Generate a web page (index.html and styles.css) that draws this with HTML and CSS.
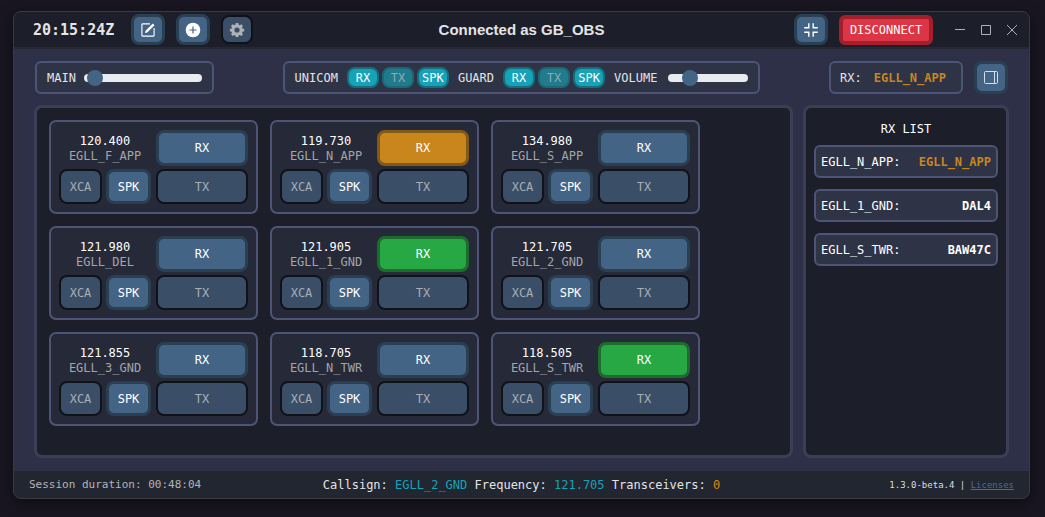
FILE: index.html
```html
<!DOCTYPE html>
<html lang="en">
<head>
<meta charset="utf-8">
<title>Radio client</title>
<link rel="stylesheet" href="styles.css">
</head>
<body>
<div class="window">
  <header class="titlebar">
    <div class="titlebar-left">
      <span class="clock">20:15:24Z</span>
      <button class="icon-btn" aria-label="Edit"><svg width="16" height="16" viewBox="0 0 16 16" fill="none" stroke="currentColor" stroke-width="1.1"><path d="M10 1.900H2.500a.6.6 0 0 0-.6.6v11a.6.6 0 0 0 .6.6h11a.6.6 0 0 0 .6-.6V6"/><path d="M4.900 11.100l.7-2.400L12.800 1.500l1.700 1.700-7.200 7.200z" fill="currentColor" stroke="none"/></svg></button>
      <button class="icon-btn" aria-label="Add"><svg width="16" height="16" viewBox="0 0 16 16"><circle cx="8" cy="8" r="7.300" fill="currentColor"/><path d="M8 4.500v7M4.500 8h7" stroke="#446485" stroke-width="1.200"/></svg></button>
      <button class="icon-btn dim" aria-label="Settings"><svg width="16" height="16" viewBox="0 0 16 16"><path d="M6.700 1h2.600l.4 1.800 1 .4 1.600-1 1.700 1.700-1 1.600.4 1 1.800.4v2.400l-1.800.4-.4 1 1 1.600-1.700 1.700-1.600-1-1 .4L9.300 15H6.700l-.4-1.600-1-.4-1.600 1L2 12.300l1-1.600-.4-1L.8 9.300V6.900l1.800-.4.4-1-1-1.600 1.700-1.700 1.600 1 1-.4z" fill="currentColor"/><circle cx="8" cy="8" r="2.600" fill="#3a4e68"/></svg></button>
    </div>
    <h1 class="title">Connected as GB_OBS</h1>
    <div class="titlebar-right">
      <button class="icon-btn" aria-label="Mini mode"><svg width="16" height="16" viewBox="0 0 16 16" fill="none" stroke="currentColor" stroke-width="1.400"><path d="M5.800 1.200v4.600H1.200M10.200 1.200v4.600h4.600M5.800 14.800v-4.600H1.200M10.200 14.800v-4.600h4.600"/></svg></button>
      <button class="disconnect">DISCONNECT</button>
      <div class="window-controls">
        <button aria-label="Minimize"><svg width="12" height="12" viewBox="0 0 12 12"><path d="M1 5.500h10"/></svg></button>
        <button aria-label="Maximize"><svg width="12" height="12" viewBox="0 0 12 12"><path d="M1.500 1.500h9v9h-9z"/></svg></button>
        <button aria-label="Close"><svg width="12" height="12" viewBox="0 0 12 12"><path d="M1 1l10 10M11 1L1 11"/></svg></button>
      </div>
    </div>
  </header>

  <main class="content">
    <div class="toolbar">
      <div class="box main-box">
        <label for="main-volume">MAIN</label>
        <input class="slider slider-main" id="main-volume" type="range" min="0" max="100" value="3">
      </div>
      <div class="box">
        <span>UNICOM</span>
        <div class="pills"><button class="pill">RX</button><button class="pill off">TX</button><button class="pill">SPK</button></div>
        <span>GUARD</span>
        <div class="pills"><button class="pill">RX</button><button class="pill off">TX</button><button class="pill">SPK</button></div>
        <label for="volume">VOLUME</label>
        <input class="slider slider-aux" id="volume" type="range" min="0" max="100" value="22">
      </div>
      <div class="toolbar-end">
        <div class="box last-rx"><span>RX:</span><strong class="amber">EGLL_N_APP</strong></div>
        <button class="icon-btn panel-btn" aria-label="Toggle RX list"><svg width="16" height="16" viewBox="0 0 16 16" fill="none" stroke="#d5dde5"><rect x="1.500" y="1.500" width="13" height="12" rx="1"/><path d="M11.500 1.500v12"/></svg></button>
      </div>
    </div>

    <div class="panels">
      <section class="panel stations" aria-label="Stations">
        <article class="station"><div class="station-id"><b>120.400</b><span>EGLL_F_APP</span></div><button class="key">RX</button><div class="pair"><button class="key off">XCA</button><button class="key">SPK</button></div><button class="key off">TX</button></article>
        <article class="station"><div class="station-id"><b>119.730</b><span>EGLL_N_APP</span></div><button class="key receiving">RX</button><div class="pair"><button class="key off">XCA</button><button class="key">SPK</button></div><button class="key off">TX</button></article>
        <article class="station"><div class="station-id"><b>134.980</b><span>EGLL_S_APP</span></div><button class="key">RX</button><div class="pair"><button class="key off">XCA</button><button class="key">SPK</button></div><button class="key off">TX</button></article>
        <article class="station"><div class="station-id"><b>121.980</b><span>EGLL_DEL</span></div><button class="key">RX</button><div class="pair"><button class="key off">XCA</button><button class="key">SPK</button></div><button class="key off">TX</button></article>
        <article class="station"><div class="station-id"><b>121.905</b><span>EGLL_1_GND</span></div><button class="key active">RX</button><div class="pair"><button class="key off">XCA</button><button class="key">SPK</button></div><button class="key off">TX</button></article>
        <article class="station"><div class="station-id"><b>121.705</b><span>EGLL_2_GND</span></div><button class="key">RX</button><div class="pair"><button class="key off">XCA</button><button class="key">SPK</button></div><button class="key off">TX</button></article>
        <article class="station"><div class="station-id"><b>121.855</b><span>EGLL_3_GND</span></div><button class="key">RX</button><div class="pair"><button class="key off">XCA</button><button class="key">SPK</button></div><button class="key off">TX</button></article>
        <article class="station"><div class="station-id"><b>118.705</b><span>EGLL_N_TWR</span></div><button class="key">RX</button><div class="pair"><button class="key off">XCA</button><button class="key">SPK</button></div><button class="key off">TX</button></article>
        <article class="station"><div class="station-id"><b>118.505</b><span>EGLL_S_TWR</span></div><button class="key active">RX</button><div class="pair"><button class="key off">XCA</button><button class="key">SPK</button></div><button class="key off">TX</button></article>
      </section>

      <aside class="panel rx-list">
        <h2>RX LIST</h2>
        <div class="rx-item"><span>EGLL_N_APP:</span><strong class="amber">EGLL_N_APP</strong></div>
        <div class="rx-item"><span>EGLL_1_GND:</span><strong>DAL4</strong></div>
        <div class="rx-item"><span>EGLL_S_TWR:</span><strong>BAW47C</strong></div>
      </aside>
    </div>
  </main>

  <footer class="statusbar">
    <span class="session">Session duration: 00:48:04</span>
    <span class="status">Callsign: <span class="teal">EGLL_2_GND</span> Frequency: <span class="teal">121.705</span> Transceivers: <span class="orange">0</span></span>
    <span class="version">1.3.0-beta.4 | <a href="#licenses">Licenses</a></span>
  </footer>
</div>
</body>
</html>
```

FILE: styles.css
```css
* { box-sizing: border-box; }

body {
  margin: 0;
  min-height: 100vh;
  display: flex;
  padding: 11px 15px 18px 13px;
  background: #191622;
  color: #e4e4e6;
  font: 12px/16px "DejaVu Sans Mono", "Liberation Mono", monospace;
}

button {
  font: inherit;
  color: #fff;
  padding: 0;
  display: flex;
  align-items: center;
  justify-content: center;
}

.window {
  flex: 1;
  display: flex;
  flex-direction: column;
  border: 1px solid #3b3a40;
  border-radius: 8px;
  overflow: hidden;
  background: #2e3047;
  box-shadow: 0 4px 14px rgba(0, 0, 0, 0.5);
}

/* Title bar */
.titlebar {
  display: grid;
  grid-template-columns: 1fr auto 1fr;
  align-items: center;
  height: 37px;
  padding: 0 11px 0 19px;
  background: #1c1e29;
  border-bottom: 2px solid #262836;
}

.titlebar-left, .titlebar-right { display: flex; align-items: center; gap: 11px; }
.titlebar-right { justify-content: flex-end; }
.clock { font-size: 15px; font-weight: 700; margin-right: 6px; }
.title { margin: 0 8px 0 0; font: 700 15px/18px "Liberation Sans", Arial, sans-serif; }

.icon-btn {
  width: 34px;
  height: 31px;
  border: 3px solid #2b3f53;
  border-radius: 8px;
  background: #446485;
}

.icon-btn.dim {
  width: 32px;
  height: 29px;
  border: 2px solid #10121a;
  background: #3a4e68;
  color: #b0b1b3;
}

.disconnect {
  width: 94px;
  height: 30px;
  border: 4px solid #a51e2b;
  border-radius: 6px;
  background: #dc3545;
}

.window-controls { display: flex; gap: 14px; margin-left: 10px; }
.window-controls button { width: 12px; height: 12px; border: 0; background: none; }
.window-controls path { fill: none; stroke: #b0b0b8; }

/* Toolbar */
.content {
  flex: 1;
  display: flex;
  flex-direction: column;
  gap: 11px;
  padding: 12px 20px 13px;
}

.toolbar { display: flex; justify-content: space-between; padding: 0 1px; }
.toolbar-end { display: flex; gap: 11px; }

.box {
  display: flex;
  align-items: center;
  gap: 9px;
  height: 33px;
  padding: 0 10px;
  border: 2px solid #4e5476;
  border-radius: 6px;
  background: #2f3346;
}

.main-box { gap: 8px; }
.last-rx { gap: 12px; padding: 0 15px 0 9px; }
.panel-btn { height: 33px; }
.pills { display: flex; gap: 3px; }

.pill {
  width: 32px;
  height: 21px;
  border: 2px solid #136f7f;
  border-radius: 8px;
  background: #17a2b8;
}

.pill.off { border-color: #1b6877; background: #207b8d; color: #92a9b4; }

.slider {
  appearance: none;
  height: 8px;
  margin: 0;
  border-radius: 4px;
  background: #e9ecef;
}

.slider-main { width: 118px; }
.slider-aux { width: 80px; margin-left: 2px; }

.slider::-webkit-slider-thumb {
  appearance: none;
  width: 16px;
  height: 16px;
  border-radius: 50%;
  background: #446485;
}

.amber { color: #c8861d; }
.teal { color: #17a2b8; }
.orange { color: #df8519; }

/* Panels */
.panels { flex: 1; display: flex; gap: 10px; }

.panel {
  border: 3px solid #3b3e56;
  border-radius: 8px;
  background: #1c1e29;
}

.stations {
  flex: 1;
  display: flex;
  flex-wrap: wrap;
  align-content: flex-start;
  gap: 12px;
  padding: 12px;
}

.station {
  display: grid;
  grid-template-columns: 92px 92px;
  grid-template-rows: 36px 35px;
  gap: 3px 5px;
  padding: 8px;
  border: 2px solid #4e5476;
  border-radius: 7px;
  background: #262937;
}

.station-id {
  display: flex;
  flex-direction: column;
  align-items: center;
  justify-content: center;
  padding-top: 2px;
  line-height: 15px;
}

.station-id b { color: #fff; font-weight: 400; }
.station-id span { color: #a3a5aa; }
.pair { display: grid; grid-template-columns: 43px 45px; gap: 4px; }

.key {
  border: 3px solid #2b3f53;
  border-radius: 8px;
  background: #446485;
}

.key.off { border: 2px solid #10121a; background: #3a4e68; color: #a9adb3; }
.key.active { border-color: #1d6c2d; background: #28a745; }
.key.receiving { border-color: #825918; background: #c8861d; }

.rx-list {
  flex: 0 0 206px;
  display: flex;
  flex-direction: column;
  gap: 11px;
  padding: 12px 8px;
  color: #fff;
}

.rx-list h2 { margin: 2px 0 -2px; font-size: 12px; line-height: 14px; font-weight: 400; text-align: center; }

.rx-item {
  display: flex;
  align-items: center;
  justify-content: space-between;
  height: 33px;
  padding: 0 5px;
  border: 2px solid #4e5476;
  border-radius: 6px;
  background: #2f3346;
}

/* Status bar */
.statusbar {
  display: grid;
  grid-template-columns: 1fr auto 1fr;
  align-items: center;
  height: 27px;
  padding: 0 15px;
  background: #222630;
}

.session { font-size: 11px; color: #b4b5b8; }
.version { font-size: 9px; text-align: right; color: #dcdde0; }
.version a { color: #446c98; }
```
